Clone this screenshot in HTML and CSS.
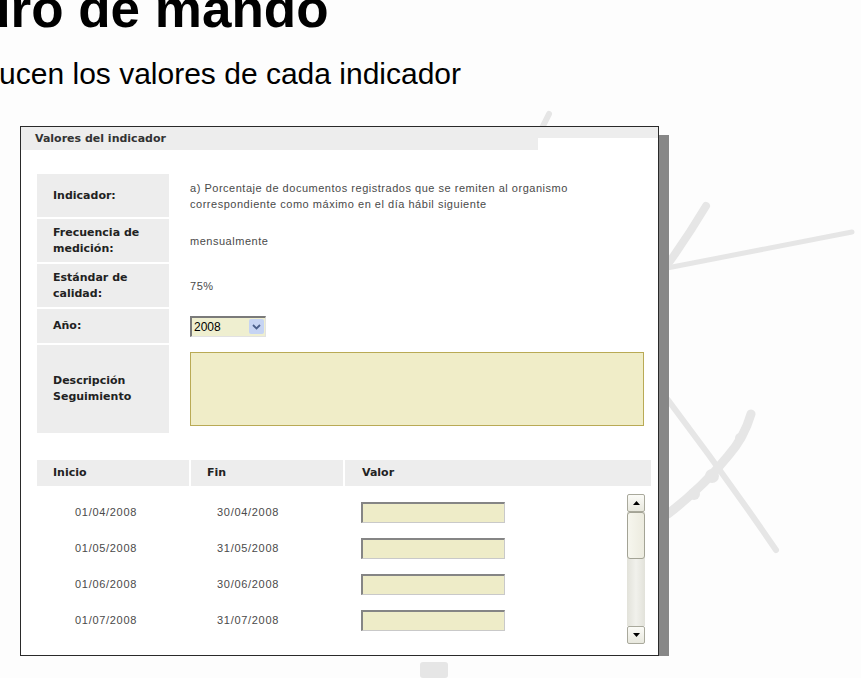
FILE: index.html
```html
<!DOCTYPE html>
<html lang="es">
<head>
    <meta charset="UTF-8">
    <title>Cuadro de mando - Valores del indicador</title>
    <link rel="stylesheet" href="styles.css">
</head>
<body>
    <!-- brush strokes behind the slide -->
    <svg class="watermark" width="861" height="678" viewBox="0 0 861 678">
        <g fill="none" stroke="#e6e6e6" stroke-linecap="round">
            <path d="M549 114 L538 136" stroke-width="6"/>
            <path d="M706 206 Q688 236 668 264" stroke-width="8"/>
            <path d="M667 268 Q760 250 852 232" stroke-width="5"/>
            <path d="M668 400 Q724 474 776 550" stroke-width="6"/>
            <path d="M751 414 Q744 438 728 456 Q704 486 668 514" stroke-width="9"/>
        </g>
        <g fill="#e6e6e6">
            <circle cx="712" cy="476" r="7"/>
            <circle cx="694" cy="494" r="6"/>
            <circle cx="740" cy="438" r="5"/>
            <rect x="420" y="662" width="28" height="16" rx="3"/>
        </g>
    </svg>

    <header class="slide-head">
        <h1 class="slide-title">Cuadro de mando</h1>
        <p class="slide-sub">Se introducen los valores de cada indicador</p>
    </header>

    <section class="dialog">
        <div class="dialog-head">
            <div class="dialog-title">Valores del indicador</div>
            <div class="dialog-head-rest"></div>
        </div>

        <div class="form">
            <div class="label">Indicador:</div>
            <div class="value">a) Porcentaje de documentos registrados que se remiten al organismo<br>correspondiente como máximo en el día hábil siguiente</div>

            <div class="label">Frecuencia de<br>medición:</div>
            <div class="value">mensualmente</div>

            <div class="label">Estándar de<br>calidad:</div>
            <div class="value">75%</div>

            <div class="label">Año:</div>
            <div class="value">
                <div class="select">
                    <span class="select-text">2008</span>
                    <span class="select-btn">
                        <svg width="9" height="6" viewBox="0 0 9 6"><path d="M1 1 L4.5 4.5 L8 1" fill="none" stroke="#4a5f8a" stroke-width="1.8"/></svg>
                    </span>
                </div>
            </div>

            <div class="label">Descripción<br>Seguimiento</div>
            <div class="value value-top">
                <div class="textarea"></div>
            </div>
        </div>

        <div class="periods">
            <div class="periods-head">
                <div class="th">Inicio</div>
                <div class="th">Fin</div>
                <div class="th th-valor">Valor</div>
            </div>
            <div class="periods-body">
                <div class="rows">
                    <div class="row">
                        <span class="start">01/04/2008</span>
                        <span class="end">30/04/2008</span>
                        <span class="cell-input"><span class="input"></span></span>
                    </div>
                    <div class="row">
                        <span class="start">01/05/2008</span>
                        <span class="end">31/05/2008</span>
                        <span class="cell-input"><span class="input"></span></span>
                    </div>
                    <div class="row">
                        <span class="start">01/06/2008</span>
                        <span class="end">30/06/2008</span>
                        <span class="cell-input"><span class="input"></span></span>
                    </div>
                    <div class="row">
                        <span class="start">01/07/2008</span>
                        <span class="end">31/07/2008</span>
                        <span class="cell-input"><span class="input"></span></span>
                    </div>
                </div>
                <div class="scrollbar">
                    <div class="sb-btn">
                        <svg width="7" height="4" viewBox="0 0 7 4"><path d="M0 4 L3.5 0 L7 4 Z" fill="#000"/></svg>
                    </div>
                    <div class="sb-track">
                        <div class="sb-thumb"></div>
                    </div>
                    <div class="sb-btn">
                        <svg width="7" height="4" viewBox="0 0 7 4"><path d="M0 0 L3.5 4 L7 0 Z" fill="#000"/></svg>
                    </div>
                </div>
            </div>
        </div>
    </section>
</body>
</html>
```

FILE: styles.css
```css
body {
    margin: 0;
    background-color: #fdfdfd;
    font-family: "Liberation Sans", Arial, sans-serif;
    color: #000;
    overflow: hidden;
}

.watermark {
    position: absolute;
    top: 0;
    left: 0;
    z-index: -1;
}

/* slide title, cut off on the left like the original capture */
.slide-head {
    white-space: nowrap;
}
.slide-title {
    margin: -21px 0 0;
    font-size: 53px;
    line-height: 60px;
    font-weight: bold;
    text-indent: -122px;
}
.slide-sub {
    margin: 18px 0 0;
    font-size: 30px;
    line-height: 34px;
    text-indent: -121px;
}

/* dialog window */
.dialog {
    margin: 35px 0 0 20px;
    width: 637px;
    height: 528px;
    border: 1px solid #2a2a2a;
    background-color: #fff;
    box-shadow: 10px 9px 0 #878787;
}
.dialog-head {
    display: flex;
    align-items: flex-start;
}
.dialog-title {
    width: 503px;
    height: 23px;
    padding-left: 14px;
    background-color: #ededed;
    font-family: "DejaVu Sans", sans-serif;
    font-weight: bold;
    font-size: 11px;
    line-height: 24px;
    color: #333;
}
.dialog-head-rest {
    flex: 1;
    height: 11px;
    background-color: #ededed;
}

.form {
    display: grid;
    grid-template-columns: 132px 1fr;
    grid-template-rows: 43px 43px 43px 34px 88px;
    row-gap: 2px;
    margin: 24px 0 0 16px;
}
.label {
    display: flex;
    align-items: center;
    padding-left: 16px;
    background-color: #ededed;
    font-family: "DejaVu Sans", sans-serif;
    font-weight: bold;
    font-size: 11px;
    line-height: 16px;
    color: #222;
}
.value {
    display: flex;
    align-items: center;
    padding-left: 21px;
    font-size: 11px;
    line-height: 16px;
    letter-spacing: 0.52px;
    color: #4a4a4a;
}
.value-top {
    align-items: flex-start;
    padding-top: 7px;
}

.select {
    display: flex;
    align-items: center;
    box-sizing: border-box;
    width: 76px;
    height: 21px;
    border-top: 2px solid #7a7a7a;
    border-left: 2px solid #7a7a7a;
    border-right: 1px solid #e2e2e2;
    border-bottom: 1px solid #e2e2e2;
    background-color: #efefd0;
}
.select-text {
    flex: 1;
    padding-left: 2px;
    font-size: 12px;
    letter-spacing: 0;
    color: #000;
}
.select-btn {
    display: flex;
    align-items: center;
    justify-content: center;
    width: 15px;
    height: 15px;
    margin-right: 1px;
    border-radius: 2px;
    background-color: #c6d4f3;
}

.textarea {
    box-sizing: border-box;
    width: 454px;
    height: 74px;
    border: 1px solid #b9aa55;
    background-color: #f0edc8;
}

/* periods table */
.periods {
    margin: 27px 7px 0 16px;
}
.periods-head {
    display: grid;
    grid-template-columns: 152px 152px 1fr;
    column-gap: 2px;
}
.th {
    height: 26px;
    padding-left: 16px;
    background-color: #ededed;
    font-family: "DejaVu Sans", sans-serif;
    font-weight: bold;
    font-size: 11px;
    line-height: 26px;
    color: #222;
}
.th-valor {
    padding-left: 17px;
}

.periods-body {
    display: flex;
    padding-top: 8px;
}
.rows {
    flex: 1;
}
.row {
    display: grid;
    grid-template-columns: 152px 152px 1fr;
    column-gap: 2px;
    align-items: center;
    height: 36px;
    font-size: 11px;
    letter-spacing: 0.7px;
    color: #4a4a4a;
}
.start {
    padding-left: 38px;
}
.end {
    padding-left: 26px;
}
.cell-input {
    padding-left: 16px;
}
.input {
    display: block;
    box-sizing: border-box;
    width: 144px;
    height: 21px;
    border-top: 2px solid #858585;
    border-left: 2px solid #858585;
    border-right: 1px solid #c9c9c9;
    border-bottom: 1px solid #c9c9c9;
    background-color: #eeecc8;
}

/* xp style scrollbar */
.scrollbar {
    display: flex;
    flex-direction: column;
    width: 18px;
    height: 150px;
    margin-right: 6px;
}
.sb-btn {
    display: flex;
    align-items: center;
    justify-content: center;
    box-sizing: border-box;
    height: 18px;
    border: 1px solid #a9a99c;
    border-radius: 2px;
    background: linear-gradient(#fbfbf7, #e8e8de);
}
.sb-track {
    flex: 1;
    background: linear-gradient(to right, #e2e2da, #f1f1ec, #e2e2da);
}
.sb-thumb {
    box-sizing: border-box;
    height: 47px;
    border: 1px solid #a3a395;
    border-radius: 3px;
    background: linear-gradient(to right, #f6f6ee, #ecebdf);
}
```
